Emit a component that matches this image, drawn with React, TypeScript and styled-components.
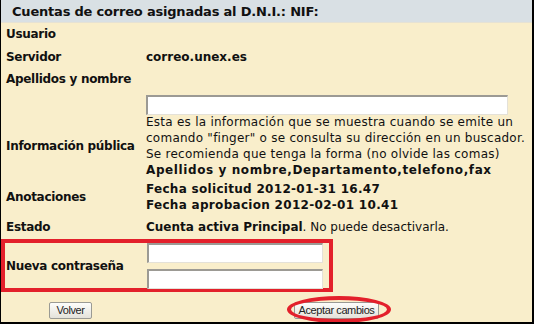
import styled, { createGlobalStyle } from "styled-components";

const GlobalStyle = createGlobalStyle`
  html, body {
    margin: 0;
    padding: 0;
    background: #ffffff;
  }
  body {
    font-family: "DejaVu Sans", Verdana, sans-serif;
    color: #111111;
  }
`;

const colors = {
  cream: "#f9eecb",
  header: "#d9e0e4",
  red: "#e3202b",
  border: "#000000",
};

const App = () => {
  return (
    <>
      <GlobalStyle />
      <Frame>
        <Header>Cuentas de correo asignadas al D.N.I.: NIF:</Header>
        <Body>
          <Row $height={22}>
            <Label>Usuario</Label>
            <Value />
          </Row>
          <Row $height={23}>
            <Label>Servidor</Label>
            <Value $bold>correo.unex.es</Value>
          </Row>
          <Row $height={22}>
            <Label>Apellidos y nombre</Label>
            <Value />
          </Row>
          <Row $height={23} $align="start">
            <Label />
            <Value>
              <TextInput $width={362} $top={5} />
            </Value>
          </Row>
          <Row $height={65}>
            <Label>Información pública</Label>
            <Value>
              <Paragraph $spacing={0.25}>
                Esta es la información que se muestra cuando se emite un
                <br />
                comando "finger" o se consulta su dirección en un buscador.
                <br />
                Se recomienda que tenga la forma (no olvide las comas)
                <br />
                <b>Apellidos y nombre,Departamento,telefono,fax</b>
              </Paragraph>
            </Value>
          </Row>
          <Row $height={38}>
            <Label>Anotaciones</Label>
            <Value $bold>
              <Paragraph $spacing={0.3}>
                Fecha solicitud 2012-01-31 16.47
                <br />
                Fecha aprobacion 2012-02-01 10.41
              </Paragraph>
            </Value>
          </Row>
          <Row $height={21}>
            <Label>Estado</Label>
            <Value>
              <b>Cuenta activa Principal</b>. No puede desactivarla.
            </Value>
          </Row>
          <HighlightRow>
            <Label>Nueva contraseña</Label>
            <Value>
              <InputStack>
                <TextInput type="password" $width={176} />
                <TextInput type="password" $width={176} />
              </InputStack>
            </Value>
          </HighlightRow>
          <ButtonBar>
            <OldButton $width={43}>Volver</OldButton>
            <Circled>
              <OldButton $width={85}>Aceptar cambios</OldButton>
              <Ellipse />
            </Circled>
          </ButtonBar>
        </Body>
      </Frame>
    </>
  );
};

export default App;

const Frame = styled.div`
  width: 534px;
  height: 324px;
  box-sizing: border-box;
  border-left: 1px solid ${colors.border};
  border-right: 2px solid ${colors.border};
  border-bottom: 2px solid ${colors.border};
  background-color: ${colors.cream};
  overflow: hidden;
  display: flex;
  flex-direction: column;
`;

const Header = styled.div`
  height: 22px;
  flex: none;
  background-color: ${colors.header};
  display: flex;
  align-items: center;
  padding-left: 11px;
  font-size: 13px;
  font-weight: bold;
  letter-spacing: -0.2px;
  border-bottom: 1px solid #e6e2d4;
`;

const Body = styled.div`
  display: flex;
  flex-direction: column;
`;

const Row = styled.div<{ $height: number; $align?: string }>`
  display: grid;
  grid-template-columns: 140px 1fr;
  align-items: ${(p) => p.$align || "center"};
  height: ${(p) => p.$height}px;
  padding-left: 5px;
  font-size: 12px;
`;

const Label = styled.div`
  font-weight: bold;
  white-space: nowrap;
  letter-spacing: -0.3px;
`;

const Value = styled.div<{ $bold?: boolean }>`
  font-weight: ${(p) => (p.$bold ? "bold" : "normal")};
  white-space: nowrap;
`;

const Paragraph = styled.div<{ $spacing: number }>`
  line-height: 16px;
  letter-spacing: ${(p) => p.$spacing}px;

  b {
    letter-spacing: 0.6px;
  }
`;

const TextInput = styled.input<{ $width: number; $top?: number }>`
  display: block;
  width: ${(p) => p.$width}px;
  height: 20px;
  box-sizing: border-box;
  margin: ${(p) => p.$top || 0}px 0 0 0;
  padding: 0 2px;
  background: #ffffff;
  border: 1px solid #e4e1d8;
  border-top: 2px solid #9c9a94;
  border-left: 2px solid #9c9a94;
  outline: none;
`;

const InputStack = styled.div`
  display: flex;
  flex-direction: column;
  gap: 6px;
`;

const HighlightRow = styled.div`
  display: grid;
  grid-template-columns: 141px auto;
  align-items: center;
  width: 332px;
  height: 53px;
  box-sizing: border-box;
  margin-top: 2px;
  border: 4px solid ${colors.red};
  padding-left: 1px;
  font-size: 12px;
`;

const ButtonBar = styled.div`
  display: flex;
  align-items: flex-start;
  gap: 202px;
  padding: 10px 0 0 48px;
  height: 30px;
  box-sizing: border-box;
`;

const Circled = styled.div`
  position: relative;
`;

const Ellipse = styled.div`
  position: absolute;
  left: -7px;
  right: -12px;
  top: -6px;
  bottom: -4px;
  border: 4px solid ${colors.red};
  border-radius: 50%;
  pointer-events: none;
`;

const OldButton = styled.button<{ $width: number }>`
  display: block;
  width: ${(p) => p.$width}px;
  height: 17px;
  padding: 0;
  font-family: "Liberation Sans", Arial, sans-serif;
  font-size: 11px;
  letter-spacing: -0.4px;
  color: #222222;
  background: linear-gradient(#fdfdfb, #e4e2da);
  border: 1px solid #9a9a94;
  border-radius: 2px;
  line-height: 13px;
  white-space: nowrap;
`;
